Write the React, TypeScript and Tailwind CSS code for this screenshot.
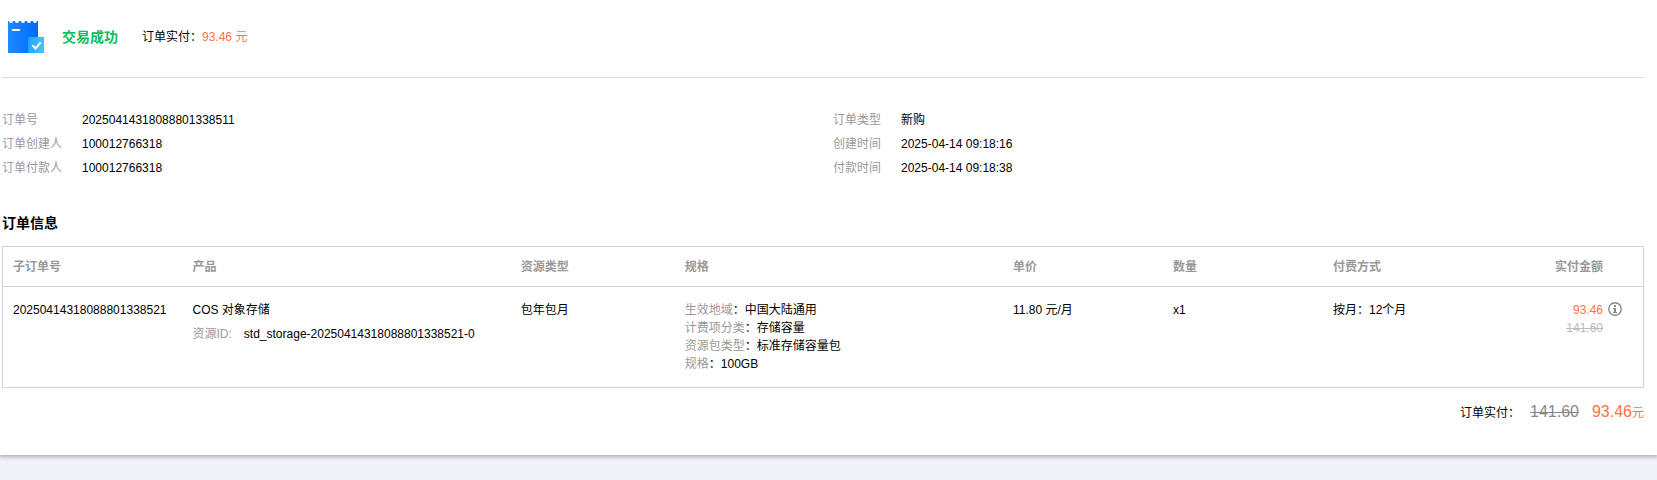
import React from "react";

type Field = { label: string; value: string };

const leftFields: Field[] = [
  { label: "订单号", value: "20250414318088801338511" },
  { label: "订单创建人", value: "100012766318" },
  { label: "订单付款人", value: "100012766318" },
];

const rightFields: Field[] = [
  { label: "订单类型", value: "新购" },
  { label: "创建时间", value: "2025-04-14 09:18:16" },
  { label: "付款时间", value: "2025-04-14 09:18:38" },
];

const specs: Field[] = [
  { label: "生效地域", value: "中国大陆通用" },
  { label: "计费项分类", value: "存储容量" },
  { label: "资源包类型", value: "标准存储容量包" },
  { label: "规格", value: "100GB" },
];

function ReceiptIcon() {
  return (
    <svg width="36" height="32" viewBox="0 0 36 32" aria-hidden="true" className="shrink-0">
      <defs>
        <linearGradient id="receipt" x1="0" y1="0" x2="1" y2="0">
          <stop offset="0" stopColor="#1f8bff" />
          <stop offset="1" stopColor="#0068ff" />
        </linearGradient>
        <linearGradient id="badge" x1="0" y1="0" x2="1" y2="0">
          <stop offset="0" stopColor="#1ba6fb" />
          <stop offset="1" stopColor="#4fc0ff" />
        </linearGradient>
      </defs>
      <path
        d="M0 0h1a2 2 0 0 0 4 0h2a2 2 0 0 0 4 0h2a2 2 0 0 0 4 0h2a2 2 0 0 0 4 0h2a2 2 0 0 0 4 0h1v32H0z"
        fill="url(#receipt)"
      />
      <rect x="4" y="8" width="8" height="2" fill="#fff" />
      <rect x="20" y="16" width="16" height="16" fill="url(#badge)" />
      <path d="M24.3 24.3l3.2 3.2 5.2-6" fill="none" stroke="#fff" strokeWidth="2" />
    </svg>
  );
}

function InfoIcon() {
  return (
    <svg width="14" height="14" viewBox="0 0 14 14" aria-hidden="true">
      <circle cx="7" cy="7" r="6.2" fill="none" stroke="#888" strokeWidth="1.4" />
      <path d="M6 3h2v2H6zM5 6h3v4h1v1H5v-1h1V7H5z" fill="#888" />
    </svg>
  );
}

function FieldList({ fields }: { fields: Field[] }) {
  return (
    <dl className="grid grid-cols-[auto_1fr] gap-x-5 leading-6">
      {fields.map((f) => (
        <React.Fragment key={f.label}>
          <dt className="text-[#999]">{f.label}</dt>
          <dd>{f.value}</dd>
        </React.Fragment>
      ))}
    </dl>
  );
}

export default function App() {
  return (
    <div className="min-h-screen overflow-hidden bg-[#f2f3f8] font-['Liberation_Sans','Noto_Sans_CJK_SC',sans-serif] text-xs text-black">
      <main className="bg-white pr-[13px] pb-[30px] pl-0.5 shadow-[0_1px_4px_1px_rgba(54,58,80,0.38)]">
        <header className="flex h-[78px] items-center border-b border-[#ddd] pb-1 pl-1.5">
          <ReceiptIcon />
          <h1 className="ml-[18px] text-sm leading-5 font-bold text-[#0abf5b]">交易成功</h1>
          <p className="ml-6 leading-5">
            订单实付：<span className="text-[#ff7243]">93.46 元</span>
          </p>
        </header>

        <section className="grid grid-cols-2 gap-x-5 pt-[30px]">
          <FieldList fields={leftFields} />
          <FieldList fields={rightFields} />
        </section>

        <h2 className="mt-[31px] text-sm leading-6 font-bold">订单信息</h2>

        <table className="mt-[11px] w-full table-fixed border-collapse border border-[#cfd5de] text-left">
          <colgroup>
            <col className="w-[180px]" />
            <col className="w-[20%]" />
            <col className="w-[10%]" />
            <col className="w-[20%]" />
            <col className="w-[160px]" />
            <col className="w-[160px]" />
            <col />
            <col />
          </colgroup>
          <thead>
            <tr className="h-10 border-b border-[#cfd5de] text-[#999]">
              <th className="px-2.5 font-bold">子订单号</th>
              <th className="px-2.5 font-bold">产品</th>
              <th className="px-2.5 font-bold">资源类型</th>
              <th className="px-2.5 font-bold">规格</th>
              <th className="px-2.5 font-bold">单价</th>
              <th className="px-2.5 font-bold">数量</th>
              <th className="px-2.5 font-bold">付费方式</th>
              <th className="pr-10 text-right font-bold">实付金额</th>
            </tr>
          </thead>
          <tbody>
            <tr className="align-top leading-[18px]">
              <td className="px-2.5 py-3.5">20250414318088801338521</td>
              <td className="px-2.5 py-3.5">
                <p>COS 对象存储</p>
                <p className="mt-1.5 flex gap-3">
                  <span className="text-[#999]">资源ID:</span>
                  <span>std_storage-20250414318088801338521-0</span>
                </p>
              </td>
              <td className="px-2.5 py-3.5">包年包月</td>
              <td className="px-2.5 py-3.5">
                {specs.map((s) => (
                  <p key={s.label}>
                    <span className="text-[#999]">{s.label}</span>：{s.value}
                  </p>
                ))}
              </td>
              <td className="px-2.5 py-3.5">11.80 元/月</td>
              <td className="px-2.5 py-3.5">x1</td>
              <td className="px-2.5 py-3.5">按月：12个月</td>
              <td className="py-3.5 pr-[21px]">
                <div className="flex justify-end gap-[5px]">
                  <div className="text-right">
                    <p className="text-[#ff7243]">93.46</p>
                    <p className="text-[#bbb] line-through">141.60</p>
                  </div>
                  <button type="button" aria-label="价格说明" className="flex h-4 items-center">
                    <InfoIcon />
                  </button>
                </div>
              </td>
            </tr>
          </tbody>
        </table>

        <footer className="mt-3 flex items-baseline justify-end leading-6">
          <span>订单实付：</span>
          <span className="ml-2.5 text-base text-[#888] line-through">141.60</span>
          <span className="ml-[13px] text-[#ff7243]">
            <span className="text-base">93.46</span>元
          </span>
        </footer>
      </main>
    </div>
  );
}
